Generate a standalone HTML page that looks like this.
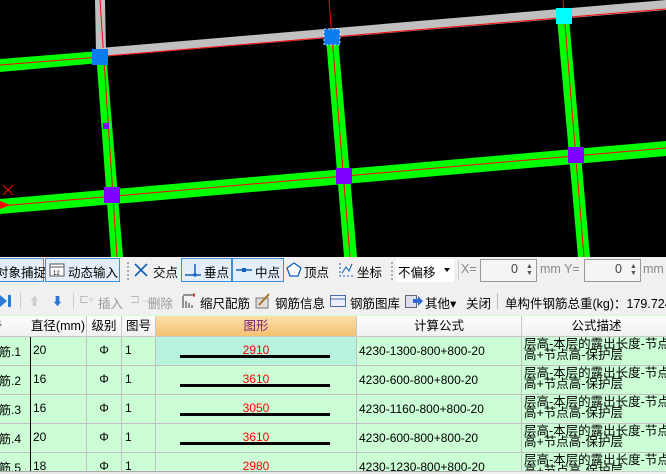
<!DOCTYPE html>
<html><head><meta charset="utf-8"><style>
*{margin:0;padding:0;box-sizing:border-box}
html,body{width:666px;height:474px;overflow:hidden}
body{background:#f0f0f0;font-family:"Liberation Sans","Noto Sans CJK SC",sans-serif;font-size:12px;color:#000;position:relative}
.a{position:absolute;white-space:nowrap}
.tb{font-size:12.5px}
.btn{position:absolute;border:1px solid #3c8fe0;background:#e4eefa}
.cell{position:absolute;border-right:1px solid #c0c0c0;border-bottom:1px solid #c0c0c0;background:#ccfed6;overflow:hidden;white-space:nowrap}
.hd{position:absolute;top:316px;height:21px;border-right:1px solid #c8c8c8;border-bottom:1px solid #c8c8c8;background:linear-gradient(#fdfdfd,#eef0f2);text-align:center;line-height:20px;font-size:12.5px}
.num{color:#f00;font-size:12px;position:absolute;left:0;right:0;text-align:center;top:6px}
.ln{position:absolute;left:24px;width:150px;height:3px;background:#000;top:18px}
.d{font-size:12.5px;line-height:11px;padding-top:2px;padding-left:2px}
#tbl{position:absolute;left:0;top:0;width:666px;height:471px;overflow:hidden}
</style></head><body>
<svg class="a" style="left:0;top:0" width="666" height="257">
<rect width="666" height="257" fill="#000"/>
<polygon points="95,0 105,0 106,52 96,52" fill="#c0c0c0"/>
<polygon points="96,52 106,52 123,257 111,257" fill="#00ff00"/>
<line x1="100" y1="0" x2="117" y2="257" stroke="#f00" stroke-width="1"/>
<polygon points="326,38 338,38 357,257 344,257" fill="#00ff00"/>
<line x1="329" y1="0" x2="350" y2="257" stroke="#f00" stroke-width="1"/>
<polygon points="557,18 569,18 590,257 578,257" fill="#00ff00"/>
<line x1="563" y1="0" x2="584" y2="257" stroke="#f00" stroke-width="1"/>
<polygon points="100,48 666,0 666,10 100,57" fill="#c0c0c0"/>
<line x1="106" y1="56" x2="666" y2="9" stroke="#f00" stroke-width="1"/>
<polygon points="0,59 100,51 100,63 0,72" fill="#00ff00"/>
<line x1="0" y1="65" x2="100" y2="57" stroke="#f00" stroke-width="1"/>
<polygon points="0,199 666,141 666,156 0,214" fill="#00ff00"/>
<line x1="0" y1="206" x2="666" y2="148" stroke="#f00" stroke-width="1"/>
<rect x="92" y="49" width="16" height="16" fill="#0a7cf0"/>
<rect x="324" y="29" width="16" height="16" fill="#0a7cf0" stroke="#fff" stroke-dasharray="2,2" stroke-width="0.8"/>
<rect x="556" y="8" width="16" height="16" fill="#00ffff"/>
<rect x="104" y="187" width="16" height="16" fill="#8000ff"/>
<rect x="336" y="168" width="16" height="16" fill="#8000ff"/>
<rect x="568" y="147" width="16" height="16" fill="#8000ff"/>
<rect x="103" y="123" width="6" height="6" fill="#8000ff"/>
<line x1="3" y1="185" x2="13" y2="195" stroke="#f00"/><line x1="13" y1="185" x2="3" y2="195" stroke="#f00"/>
<polygon points="0,201 10,205 0,209" fill="#f00"/>
</svg>
<div class="a" style="left:0;top:257px;width:666px;height:29px;background:#f0f0f0"></div>
<div class="btn" style="left:-2px;top:258px;width:46px;height:24px"></div>
<div class="a tb" style="left:-4px;top:262px">对象捕捉</div>
<div class="btn" style="left:45px;top:258px;width:75px;height:24px"></div>
<svg class="a" style="left:49px;top:262px" width="16" height="16"><rect x="1" y="2" width="14" height="12" fill="#fff" stroke="#555"/><line x1="1" y1="5" x2="15" y2="5" stroke="#555"/><text x="4" y="13" font-size="6" font-family="Liberation Sans">12</text></svg>
<div class="a tb" style="left:68px;top:262px">动态输入</div>
<div class="a" style="left:127px;top:262px;width:2px;height:18px;border-left:2px dotted #aaa"></div>
<svg class="a" style="left:133px;top:262px" width="16" height="16"><path d="M2 2L14 14M14 2L2 14" stroke="#1060c0" stroke-width="1.6"/></svg>
<div class="a tb" style="left:153px;top:262px">交点</div>
<div class="btn" style="left:181px;top:258px;width:51px;height:24px"></div>
<svg class="a" style="left:184px;top:262px" width="18" height="16"><path d="M1 13H17M11 2V14" stroke="#1060c0" stroke-width="1.5"/><rect x="9.5" y="11.5" width="3" height="3" fill="#1060c0"/></svg>
<div class="a tb" style="left:204px;top:262px">垂点</div>
<div class="btn" style="left:232px;top:258px;width:52px;height:24px"></div>
<svg class="a" style="left:235px;top:262px" width="18" height="16"><path d="M1 8H17" stroke="#1060c0" stroke-width="1.5"/><rect x="7" y="6" width="4" height="4" fill="#1060c0"/></svg>
<div class="a tb" style="left:255px;top:262px">中点</div>
<svg class="a" style="left:286px;top:262px" width="16" height="16"><path d="M8 1L15 6L12 14H4L1 6Z" fill="#fff" stroke="#1060c0" stroke-width="1.3"/></svg>
<div class="a tb" style="left:304px;top:262px">顶点</div>
<svg class="a" style="left:337px;top:261px" width="18" height="18"><path d="M3 2V15H16" stroke="#1060c0" fill="none" stroke-dasharray="2,2"/><path d="M5 12L9 6L12 10L15 3" stroke="#1060c0" fill="none"/></svg>
<div class="a tb" style="left:357px;top:262px">坐标</div>
<div class="a" style="left:391px;top:262px;width:2px;height:18px;border-left:2px dotted #aaa"></div>
<div class="a" style="left:396px;top:259px;width:58px;height:23px;background:#fff"></div>
<div class="a tb" style="left:398px;top:262px">不偏移</div>
<div class="a" style="left:444px;top:268px;border:3px solid transparent;border-top:4px solid #000"></div>
<div class="a" style="left:458px;top:260px;width:1px;height:20px;background:#ccc"></div>
<div class="a tb" style="left:461px;top:262px;color:#888">X=</div>
<div class="a" style="left:480px;top:259px;width:57px;height:23px;background:#f4f4f4;border:1px solid #999"></div>
<div class="a tb" style="left:511px;top:262px;color:#444">0</div>
<div class="a" style="left:526px;top:263px;font-size:7px;color:#555;line-height:7px">▲<br>▼</div>
<div class="a tb" style="left:540px;top:262px;color:#888">mm Y=</div>
<div class="a" style="left:584px;top:259px;width:57px;height:23px;background:#f4f4f4;border:1px solid #999"></div>
<div class="a tb" style="left:615px;top:262px;color:#444">0</div>
<div class="a" style="left:630px;top:263px;font-size:7px;color:#555;line-height:7px">▲<br>▼</div>
<div class="a tb" style="left:643px;top:262px;color:#888">mm</div>
<div class="a" style="left:0;top:287px;width:666px;height:28px;background:#f0f0f0"></div>
<svg class="a" style="left:0;top:294px" width="12" height="14"><path d="M0 1L7 7L0 13Z" fill="#2a7ad8"/><rect x="8" y="1" width="3" height="12" fill="#2a7ad8"/></svg>
<div class="a" style="left:20px;top:293px;width:1px;height:16px;background:#ccc"></div>
<div class="a" style="left:29px;top:293px;color:#ccc;font-size:11px">⬆</div>
<div class="a" style="left:52px;top:293px;color:#3070d0;font-size:11px">⬇</div>
<div class="a" style="left:73px;top:293px;width:1px;height:16px;background:#ccc"></div>
<div class="a" style="left:79px;top:292px;color:#bbb;font-size:12px">⊏▫</div>
<div class="a tb" style="left:98px;top:293px;color:#999">插入</div>
<div class="a" style="left:130px;top:292px;color:#bbb;font-size:12px">⊐→</div>
<div class="a tb" style="left:148px;top:293px;color:#999">删除</div>
<svg class="a" style="left:182px;top:293px" width="14" height="16"><path d="M1 3V15M4 8V15M7 10V15M10 12V15M1 2H13" stroke="#333"/><path d="M12 0V4" stroke="#d00"/></svg>
<div class="a tb" style="left:200px;top:293px">缩尺配筋</div>
<svg class="a" style="left:255px;top:293px" width="16" height="16"><rect x="1" y="5" width="12" height="10" fill="#ddd" stroke="#777"/><path d="M4 12L14 1" stroke="#b07020" stroke-width="2"/></svg>
<div class="a tb" style="left:275px;top:293px">钢筋信息</div>
<svg class="a" style="left:330px;top:294px" width="16" height="14"><rect x="0.5" y="1.5" width="15" height="11" fill="#eef" stroke="#4a6ea8"/><line x1="0" y1="5" x2="16" y2="5" stroke="#4a6ea8"/></svg>
<div class="a tb" style="left:350px;top:293px">钢筋图库</div>
<svg class="a" style="left:405px;top:293px" width="18" height="16"><rect x="0.5" y="2.5" width="11" height="12" fill="#dde" stroke="#667"/><path d="M8 6H13V3L18 8L13 13V10H8Z" fill="#2a6ad0"/></svg>
<div class="a tb" style="left:425px;top:293px">其他▾</div>
<div class="a tb" style="left:466px;top:293px">关闭</div>
<div class="a" style="left:497px;top:293px;width:1px;height:16px;background:#bbb"></div>
<div class="a tb" style="left:505px;top:293px">单构件钢筋总重(kg)：179.724</div>
<div id="tbl">
<div class="a" style="left:0;top:315px;width:666px;height:159px;background:#ccfed6"></div>
<div class="hd" style="left:-10px;width:41px">号&nbsp;&nbsp;&nbsp;&nbsp;&nbsp;&nbsp;&nbsp;&nbsp;</div>
<div class="hd" style="left:30px;width:57px">直径(mm)</div>
<div class="hd" style="left:87px;width:35px">级别</div>
<div class="hd" style="left:122px;width:34px">图号</div>
<div class="hd" style="left:156px;width:201px;background:linear-gradient(#fbe0a8,#f3c170);color:#7a1a7a">图形</div>
<div class="hd" style="left:357px;width:165px">计算公式</div>
<div class="hd" style="left:522px;width:150px">公式描述</div>

<div class="cell" style="left:-1px;top:337px;width:32px;height:29px;padding:6px 0 0 0">筋.1</div>
<div class="cell" style="left:31px;top:337px;width:56px;height:29px;padding:6px 0 0 2px">20</div>
<div class="cell" style="left:87px;top:337px;width:35px;height:29px;text-align:center;padding-top:6px">Φ</div>
<div class="cell" style="left:122px;top:337px;width:34px;height:29px;padding:6px 0 0 3px">1</div>
<div class="cell" style="left:156px;top:337px;width:201px;height:29px;background:#b6f2dc"><div class="num">2910</div><div class="ln"></div></div>
<div class="cell" style="left:357px;top:337px;width:165px;height:29px;padding:7px 0 0 2px">4230-1300-800+800-20</div>
<div class="cell d" style="left:522px;top:337px;width:150px;height:29px">层高-本层的露出长度-节点<br>高+节点高-保护层</div>

<div class="cell" style="left:-1px;top:366px;width:32px;height:29px;padding:6px 0 0 0">筋.2</div>
<div class="cell" style="left:31px;top:366px;width:56px;height:29px;padding:6px 0 0 2px">16</div>
<div class="cell" style="left:87px;top:366px;width:35px;height:29px;text-align:center;padding-top:6px">Φ</div>
<div class="cell" style="left:122px;top:366px;width:34px;height:29px;padding:6px 0 0 3px">1</div>
<div class="cell" style="left:156px;top:366px;width:201px;height:29px"><div class="num">3610</div><div class="ln"></div></div>
<div class="cell" style="left:357px;top:366px;width:165px;height:29px;padding:7px 0 0 2px">4230-600-800+800-20</div>
<div class="cell d" style="left:522px;top:366px;width:150px;height:29px">层高-本层的露出长度-节点<br>高+节点高-保护层</div>

<div class="cell" style="left:-1px;top:395px;width:32px;height:29px;padding:6px 0 0 0">筋.3</div>
<div class="cell" style="left:31px;top:395px;width:56px;height:29px;padding:6px 0 0 2px">16</div>
<div class="cell" style="left:87px;top:395px;width:35px;height:29px;text-align:center;padding-top:6px">Φ</div>
<div class="cell" style="left:122px;top:395px;width:34px;height:29px;padding:6px 0 0 3px">1</div>
<div class="cell" style="left:156px;top:395px;width:201px;height:29px"><div class="num">3050</div><div class="ln"></div></div>
<div class="cell" style="left:357px;top:395px;width:165px;height:29px;padding:7px 0 0 2px">4230-1160-800+800-20</div>
<div class="cell d" style="left:522px;top:395px;width:150px;height:29px">层高-本层的露出长度-节点<br>高+节点高-保护层</div>

<div class="cell" style="left:-1px;top:424px;width:32px;height:29px;padding:6px 0 0 0">筋.4</div>
<div class="cell" style="left:31px;top:424px;width:56px;height:29px;padding:6px 0 0 2px">20</div>
<div class="cell" style="left:87px;top:424px;width:35px;height:29px;text-align:center;padding-top:6px">Φ</div>
<div class="cell" style="left:122px;top:424px;width:34px;height:29px;padding:6px 0 0 3px">1</div>
<div class="cell" style="left:156px;top:424px;width:201px;height:29px"><div class="num">3610</div><div class="ln"></div></div>
<div class="cell" style="left:357px;top:424px;width:165px;height:29px;padding:7px 0 0 2px">4230-600-800+800-20</div>
<div class="cell d" style="left:522px;top:424px;width:150px;height:29px">层高-本层的露出长度-节点<br>高+节点高-保护层</div>

<div class="cell" style="left:-1px;top:453px;width:32px;height:29px;padding:6px 0 0 0">筋.5</div>
<div class="cell" style="left:31px;top:453px;width:56px;height:29px;padding:6px 0 0 2px">18</div>
<div class="cell" style="left:87px;top:453px;width:35px;height:29px;text-align:center;padding-top:6px">Φ</div>
<div class="cell" style="left:122px;top:453px;width:34px;height:29px;padding:6px 0 0 3px">1</div>
<div class="cell" style="left:156px;top:453px;width:201px;height:29px"><div class="num">2980</div><div class="ln"></div></div>
<div class="cell" style="left:357px;top:453px;width:165px;height:29px;padding:7px 0 0 2px">4230-1230-800+800-20</div>
<div class="cell d" style="left:522px;top:453px;width:150px;height:29px">层高-本层的露出长度-节点<br>高+节点高-保护层</div>

<div class="a" style="left:30px;top:337px;width:1px;height:137px;background:#000"></div>
</div>
<div class="a" style="left:0;top:471px;width:462px;height:3px;background:#e8e8e8;border-top:1px solid #aaa"></div>
<div class="a" style="left:463px;top:471px;width:203px;height:3px;background:#f0f0f0;border-top:1px solid #ccc"></div>
</body></html>
